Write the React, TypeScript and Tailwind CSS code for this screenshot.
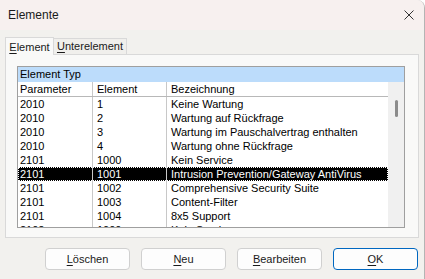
import React from 'react';

const ROWS: [string, string, string][] = [
  ['2010', '1', 'Keine Wartung'],
  ['2010', '2', 'Wartung auf Rückfrage'],
  ['2010', '3', 'Wartung im Pauschalvertrag enthalten'],
  ['2010', '4', 'Wartung ohne Rückfrage'],
  ['2101', '1000', 'Kein Service'],
  ['2101', '1001', 'Intrusion Prevention/Gateway AntiVirus'],
  ['2101', '1002', 'Comprehensive Security Suite'],
  ['2101', '1003', 'Content-Filter'],
  ['2101', '1004', '8x5 Support'],
  ['2102', '1000', 'Kein Service'],
];

const SELECTED = 5;

function Mn({ children }: { children: React.ReactNode }) {
  return <span className="underline underline-offset-[2px]">{children}</span>;
}

function Button({ children, primary }: { children: React.ReactNode; primary?: boolean }) {
  return (
    <button
      className={
        'w-[85px] h-[22px] rounded-[4px] bg-[#fdfdfd] text-[11px] text-[#1a1a1a] flex items-center justify-center border ' +
        (primary ? 'border-[#0067c0]' : 'border-[#d0d0d0]')
      }
    >
      {children}
    </button>
  );
}

export default function App() {
  return (
    <div
      className="w-[425px] h-[279px] bg-[#f2f1ee] flex flex-col border-r border-[#b4b4b4] rounded-tr-[8px] overflow-hidden"
      style={{ fontFamily: '"Liberation Sans", Arial, sans-serif' }}
    >
      {/* Title bar */}
      <div className="h-[30px] bg-[#f7f0ef] flex items-center justify-between pl-[8px] pr-[10px] shrink-0">
        <span className="text-[12px] text-[#1a1a1a]">Elemente</span>
        <svg width="10" height="10" viewBox="0 0 10 10">
          <path d="M0.5 0.5 L9.5 9.5 M9.5 0.5 L0.5 9.5" stroke="#333" strokeWidth="1" fill="none" />
        </svg>
      </div>

      {/* Tabs */}
      <div className="px-[5px] pt-[6px]">
        <div className="flex items-end h-[18px]">
          <div className="relative z-10 h-[18px] w-[49px] bg-[#f9f9f8] border border-b-0 border-[#d9d9d9] flex items-start justify-center pt-[1px] text-[11px] text-[#1a1a1a] -mb-[1px]">
            <Mn>E</Mn>lement
          </div>
          <div className="h-[16px] w-[73px] bg-[#f0efec] border border-l-0 border-b-0 border-[#d9d9d9] flex items-center justify-center text-[11px] text-[#1a1a1a]">
            <Mn>U</Mn>nterelement
          </div>
        </div>

        {/* Tab panel */}
        <div className="w-[414px] h-[184px] border border-[#d9d9d9] bg-[#f9f9f8] pl-[11px] pt-[11px]">
          <div className="w-[388px] h-[162px] border border-[#9f9f9f] bg-white flex flex-col overflow-hidden text-[11px] text-black">
            <div className="h-[15px] bg-[#bcdcfb] pl-[2px] flex items-center shrink-0">Element Typ</div>
            <div className="flex flex-1 min-h-0">
              <div className="flex-1 flex flex-col overflow-hidden">
                <div className="h-[15px] flex border-b border-[#b8b8b8] shrink-0">
                  <div className="w-[75px] border-r border-[#c8c8c8] pl-[2px] flex items-center">Parameter</div>
                  <div className="w-[74px] border-r border-[#c8c8c8] pl-[4px] flex items-center">Element</div>
                  <div className="flex-1 pl-[4px] flex items-center">Bezeichnung</div>
                </div>
                {ROWS.map((r, i) => {
                  const sel = i === SELECTED;
                  return (
                    <div
                      key={i}
                      className={
                        'h-[14px] flex shrink-0 ' +
                        (sel ? 'bg-black text-white outline-1 outline-dotted outline-white -outline-offset-1' : '')
                      }
                    >
                      <div className="w-[75px] border-r border-[#c8c8c8] pl-[2px] flex items-center">{r[0]}</div>
                      <div className="w-[74px] border-r border-[#c8c8c8] pl-[4px] flex items-center">{r[1]}</div>
                      <div className="flex-1 pl-[4px] flex items-center whitespace-nowrap">{r[2]}</div>
                    </div>
                  );
                })}
              </div>
              <div className="w-[16px] bg-[#f0f0f0] shrink-0">
                <div className="ml-[7px] mt-[18px] w-[3px] h-[17px] rounded-full bg-[#8b8b8b]" />
              </div>
            </div>
          </div>
        </div>
      </div>

      {/* Buttons */}
      <div className="flex justify-end gap-[11px] pr-[6px] mt-[10px]">
        <Button>
          <Mn>L</Mn>öschen
        </Button>
        <Button>
          <Mn>N</Mn>eu
        </Button>
        <Button>
          <Mn>B</Mn>earbeiten
        </Button>
        <Button primary>
          <Mn>O</Mn>K
        </Button>
      </div>
    </div>
  );
}
